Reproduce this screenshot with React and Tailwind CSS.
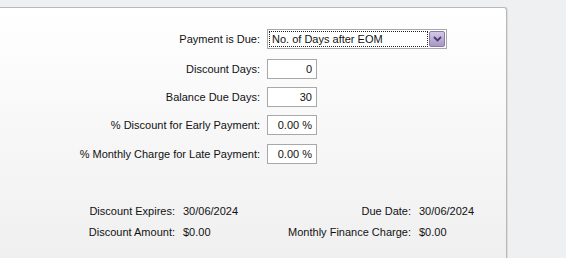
export default function App() {
  const font = { fontFamily: '"Liberation Sans", Arial, sans-serif' };
  const rows = [
    ["Discount Days:", "0", "mt-[10px]"],
    ["Balance Due Days:", "30", "mt-[8px]"],
    ["% Discount for Early Payment:", "0.00 %", "mt-[8px]"],
    ["% Monthly Charge for Late Payment:", "0.00 %", "mt-[9px]"],
  ];
  return (
    <div className="w-[566px] h-[258px] bg-[#eff0f1] pt-[7px] overflow-hidden text-[11px] text-[#111] whitespace-nowrap" style={font}>
      <div className="w-[508px] h-[260px] ml-[-1px] border-t border-r border-[#b9b9b9] rounded-tr-[3px] bg-gradient-to-b from-[#ffffff] to-[#efeff0] shadow-[1px_0_0_#dcdcdc]">
        <div className="pt-[21px]">
          <div className="flex items-center h-[20px]">
            <div className="w-[262px] text-right pr-[1px]">Payment is Due:</div>
            <div className="ml-[6px] w-[180px] h-[20px] border border-[#a8a8a8] bg-white flex items-center p-[1px]">
              <div className="flex-1 h-full border border-dotted border-[#222] flex items-center pl-[2px] leading-none">
                No. of Days after EOM
              </div>
              <div className="w-[16px] h-[16px] ml-[1px] rounded-[2px] border border-[#8a78a8] bg-gradient-to-b from-[#d4c8e6] to-[#a896c4] flex items-center justify-center">
                <svg width="9" height="6" viewBox="0 0 9 6">
                  <path d="M1 1 L4.5 4.5 L8 1" fill="none" stroke="#4b3a6e" strokeWidth="1.8" />
                </svg>
              </div>
            </div>
          </div>
          {rows.map(([l, v, m]) => (
            <div key={l} className={`flex items-center h-[20px] ${m}`}>
              <div className="w-[262px] text-right pr-[1px]">{l}</div>
              <div className="ml-[6px] w-[50px] h-[20px] border border-[#a8a8a8] bg-white flex items-center justify-end pr-[4px]">
                {v}
              </div>
            </div>
          ))}
          <div className="mt-[41px] grid grid-cols-[176px_100px_136px_auto] gap-y-[8px] leading-[13px]">
            <div className="text-right">Discount Expires:</div>
            <div className="pl-[8px]">30/06/2024</div>
            <div className="text-right">Due Date:</div>
            <div className="pl-[8px]">30/06/2024</div>
            <div className="text-right">Discount Amount:</div>
            <div className="pl-[8px]">$0.00</div>
            <div className="text-right">Monthly Finance Charge:</div>
            <div className="pl-[8px]">$0.00</div>
          </div>
        </div>
      </div>
    </div>
  );
}
